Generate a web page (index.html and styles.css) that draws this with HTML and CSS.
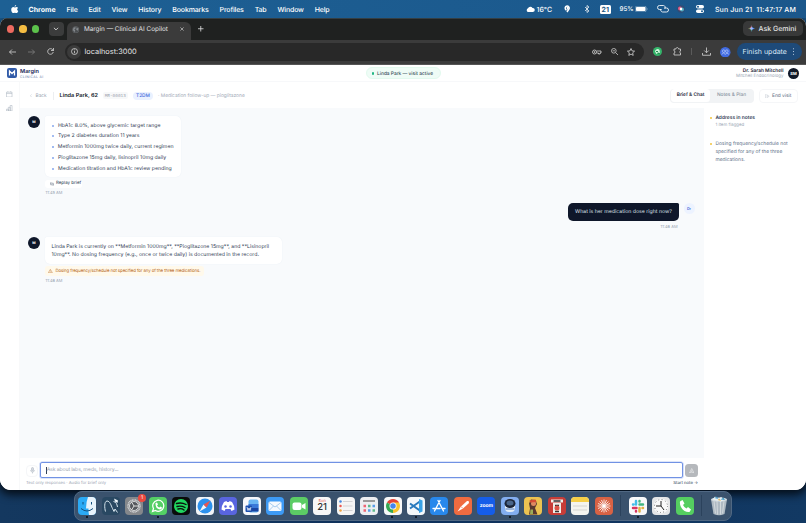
FILE: index.html
```html
<!DOCTYPE html>
<html lang="en">
<head>
<meta charset="utf-8">
<title>Margin — Clinical AI Copilot</title>
<link rel="stylesheet" href="styles.css">
</head>
<body>
<div class="desktop">
  <header class="menubar">
    <svg class="apple" viewBox="0 0 16 18"><path fill="#fff" d="M11 0c.1 2-1.500 3.800-3.300 3.800C7.500 2 9.200.2 11 0zM14.800 6.100c-2.600 1.700-2.200 5.200.7 6.400-.8 2.300-2.400 5-4 5-1.300 0-1.700-.8-3.200-.8s-2 .8-3.200.8C3 17.500.5 13.500.5 9.800c0-3.500 2.200-5.400 4.400-5.400 1.400 0 2.400.9 3.400.9s2.200-1 4-1c1.100.1 2.100.8 2.500 1.800z"/></svg>
    <nav class="menus"><b>Chrome</b><span>File</span><span>Edit</span><span>View</span><span>History</span><span>Bookmarks</span><span>Profiles</span><span>Tab</span><span>Window</span><span>Help</span></nav>
    <div class="status">
      <svg class="s-cloud" viewBox="0 0 18 12"><path fill="#fff" d="M4 12a4 4 0 0 1 0-7.500A5 5 0 0 1 13 4a4 4 0 0 1 1 8z"/></svg>
      <span class="s-temp">16°C</span>
      <svg class="s-pin" viewBox="0 0 12 16"><path fill="none" stroke="#fff" stroke-width="3" d="M4 10A4 4 0 1 1 9 8l-4 6M6 4v5"/></svg>
      <svg class="s-bt" viewBox="0 0 10 16"><path fill="none" stroke="#fff" stroke-width="1.400" d="M1 4l8 8-4 3V1l4 3-8 8"/></svg>
      <span class="s-day">21</span>
      <span class="s-pct">95%</span>
      <svg class="s-bat" viewBox="0 0 26 12"><rect x=".5" y=".5" width="22" height="11" rx="3" fill="none" stroke="#b4cbdd"/><rect x="2" y="2" width="19" height="8" rx="1.500" fill="#fff"/><path fill="#b4cbdd" d="M24 4q2 2 0 4z"/></svg>
      <svg class="s-link" viewBox="0 0 24 16"><g fill="none" stroke="#fff" stroke-width="1.700"><path d="M9 9H5a4 4 0 0 1 0-8h8a4 4 0 0 1 3 6"/><path d="M14 6h5a4 4 0 0 1 0 8h-8a4 4 0 0 1-3-6"/></g></svg>
      <svg class="s-siri" viewBox="0 0 16 16"><circle cx="8" cy="8" r="7.500" fill="#344b73"/><circle cx="6" cy="7" r="4" fill="#e05b83"/><circle cx="10" cy="9" r="4" fill="#51afc4"/><circle cx="8" cy="8" r="2.500" fill="#fff"/></svg>
      <svg class="s-ctl" viewBox="0 0 16 16"><rect width="16" height="7" rx="3.500" fill="#fff"/><circle cx="4" cy="3.500" r="2" fill="#1d5b8f"/><rect y="9" width="16" height="7" rx="3.500" fill="#fff"/><circle cx="12" cy="12.500" r="2" fill="#1d5b8f"/></svg>
      <span class="s-date">Sun Jun 21&nbsp; 11:47:17 AM</span>
    </div>
  </header>

  <main class="window">
    <div class="tabstrip">
      <div class="lights"><i class="red"></i><i class="yellow"></i><i class="green"></i></div>
      <div class="tabsearch"><svg viewBox="0 0 10 10"><path class="ln" d="M1.500 3L5 6.500 8.500 3"/></svg></div>
      <div class="tab">
        <svg class="globe" viewBox="0 0 16 16"><circle cx="8" cy="8" r="7" fill="#4b4e51" stroke="#73777b"/><path fill="#85898d" d="M3 4l4-2 1 3-3 2 2 3-1 3-4-4zM10 3l4 3-2 4-3-2z"/></svg>
        <span>Margin — Clinical AI Copilot</span>
        <svg class="x" viewBox="0 0 10 10"><path class="ln" d="M1 1l8 8M9 1L1 9"/></svg>
      </div>
      <svg class="plus" viewBox="0 0 10 10"><path class="ln" d="M5 0v10M0 5h10"/></svg>
      <div class="gemini"><svg viewBox="0 0 16 16"><path fill="#4e8df5" d="M8 0q1 7 8 8-7 1-8 8z"/><path fill="#e66556" d="M8 0Q7 7 0 8h8z"/><path fill="#58b87c" d="M0 8q7 1 8 8V8z"/><path fill="#a9b8f6" d="M8 4q1 3 4 4-3 1-4 4-1-3-4-4 3-1 4-4z"/></svg><span>Ask Gemini</span></div>
    </div>
    <div class="toolbar">
      <svg class="t-back" viewBox="0 0 14 12"><path class="ln" d="M14 6H1M6 1L1 6l5 5"/></svg>
      <svg class="t-fwd" viewBox="0 0 14 12"><path class="ln" d="M0 6h13M8 1l5 5-5 5"/></svg>
      <svg class="t-rel" viewBox="0 0 14 14"><path class="ln" d="M12.500 8A5.600 5.600 0 1 1 11 3l2 2M13 0v5H8"/></svg>
      <div class="omnibox">
        <span class="info"><svg viewBox="0 0 14 14"><circle class="ln" cx="7" cy="7" r="6"/><path class="ln" d="M7 6v4.500M7 3v1.500"/></svg></span>
        <span class="url">localhost:3000</span>
        <svg class="o-key" viewBox="0 0 20 12"><circle class="ln" cx="5" cy="6" r="4"/><circle cx="5" cy="6" r="1.500" fill="#ddd"/><path class="ln" d="M9 4h9v4h-2v2h-3V8H9"/></svg>
        <svg class="o-zoom" viewBox="0 0 16 16"><circle class="ln" cx="6" cy="6" r="5"/><path class="ln" d="M10 10l5.500 5.500M3.500 6h5"/></svg>
        <svg class="o-star" viewBox="0 0 16 16"><path class="ln" d="M8 1l2.100 4.800 5 .5-3.800 3.400 1.100 5.100L8 12.200l-4.400 2.600 1.100-5.100L.9 6.300l5-.5z"/></svg>
      </div>
      <svg class="t-green" viewBox="0 0 18 18"><circle cx="9" cy="9" r="9" fill="#35b56b"/><path fill="#d5f5df" d="M4 9a5 5 0 0 1 9-3l1 6-3-1-4 3z"/><path d="M6 9h4M9 12l5 2" stroke="#218d50" stroke-width="2"/></svg>
      <svg class="t-ext" viewBox="0 0 18 18"><path class="ln" d="M2 4h4c0-4 5-4 5 0h4v4c-2 0-2 4 0 4v4H2v-4c3 0 3-4 0-4z"/></svg>
      <i class="t-sep"></i>
      <svg class="t-down" viewBox="0 0 18 18"><path class="ln" d="M9 1v10M4.500 7L9 11.500 13.500 7M1 12v4.500h16V12"/></svg>
      <svg class="t-user" viewBox="0 0 20 20"><circle cx="10" cy="10" r="10" fill="#416be2"/><g fill="none" stroke="#bdcef8" stroke-width="1.300"><circle cx="7" cy="8" r="2.500"/><circle cx="13" cy="8" r="2.500"/><path d="M3 14q4-5 7 0 3-5 7 0"/></g></svg>
      <div class="finish"><span>Finish update</span><b></b></div>
    </div>

    <div class="app">
      <div class="topbar">
        <div class="brand">
          <svg viewBox="0 0 20 20"><rect width="20" height="20" rx="4" fill="#315ba8"/><path d="M5 15V6l5 5 5-5v9" fill="none" stroke="#fff" stroke-width="2.500"/></svg>
          <div><b>Margin</b><small>CLINICAL AI</small></div>
        </div>
        <div class="active"><i></i><span>Linda Park — visit active</span></div>
        <div class="doctor"><div><b>Dr. Sarah Mitchell</b><small>Mitchell Endocrinology</small></div><span class="sm">SM</span></div>
      </div>
      <div class="body">
        <aside class="rail">
          <svg viewBox="0 0 14 14"><path class="gr" d="M1 2.500h12V13H1zM1 5.500h12M4 .5v2M10 .5v2"/></svg>
          <svg viewBox="0 0 14 14"><path class="gr" d="M1 13V9h4v4zM5 13V5h4v8zM9 13V1h4v12z"/></svg>
        </aside>
        <section class="content">
          <div class="subhead">
            <span class="back"><svg viewBox="0 0 6 10"><path class="gr" d="M5 1L1 5l4 4"/></svg>Back</span>
            <b class="patient">Linda Park, 62</b>
            <span class="mr">MR-00013</span>
            <span class="t2">T2DM</span>
            <span class="reason">· Medication follow-up — pioglitazone</span>
            <div class="seg"><b>Brief &amp; Chat</b><span>Notes &amp; Plan</span></div>
            <div class="end"><svg viewBox="0 0 14 14"><path class="gr" d="M5 1H2v12h3M7 3v8l6-4z"/></svg>End visit</div>
          </div>
          <div class="cols">
            <div class="chatcol">
              <div class="chat">
                <div class="msg">
                  <span class="av">M</span>
                  <div class="stack">
                    <ul class="bubble brief"><li>HbA1c 8.0%, above glycemic target range</li><li>Type 2 diabetes duration 11 years</li><li>Metformin 1000mg twice daily, current regimen</li><li>Pioglitazone 15mg daily, lisinopril 10mg daily</li><li>Medication titration and HbA1c review pending</li></ul>
                    <span class="replay"><svg viewBox="0 0 12 12"><path fill="none" stroke="#475569" stroke-width="1.200" d="M4 1L1 3.500 4 6M1 3.500h9V6M8 6l3 2.500L8 11M11 8.500H2V6"/></svg>Replay brief</span>
                    <time>11:45 AM</time>
                  </div>
                </div>
                <div class="msg mine">
                  <div class="stack"><div class="ask">What is her medication dose right now?</div><time>11:46 AM</time></div>
                  <span class="dr">Dr</span>
                </div>
                <div class="msg reply">
                  <span class="av">M</span>
                  <div class="stack">
                    <div class="bubble answer">Linda Park is currently on **Metformin 1000mg**, **Pioglitazone 15mg**, and **Lisinopril<br>10mg**. No dosing frequency (e.g., once or twice daily) is documented in the record.</div>
                    <span class="warn"><svg viewBox="0 0 14 12"><path fill="none" stroke="#b86b25" stroke-width="1.300" d="M7 1l6 10H1zM7 4.500v3M7 8.500v1"/></svg>Dosing frequency/schedule not specified for any of the three medications.</span>
                    <time>11:46 AM</time>
                  </div>
                </div>
              </div>
              <div class="composer">
                <div class="row">
                  <span class="mic"><svg viewBox="0 0 10 14"><rect x="3" y="1" width="4" height="7" rx="2" fill="#d5dae1" stroke="#a5aebb"/><path fill="none" stroke="#a5aebb" d="M1 6q0 4 4 4t4-4M5 10v3"/></svg></span>
                  <div class="input"><i></i>Ask about labs, meds, history...</div>
                  <span class="send"><svg viewBox="0 0 12 12"><path fill="none" stroke="#fff" d="M6 1l5 10-5-2-5 2zM6 5v4"/></svg></span>
                </div>
                <div class="hint"><span>Text only responses · Audio for brief only</span><span class="start">Start note →</span></div>
              </div>
            </div>
            <aside class="notes">
              <div class="nh"><i></i><div><b>Address in notes</b><small>1 item flagged</small></div></div>
              <div class="ni"><i></i><p>Dosing frequency/schedule not<br>specified for any of the three<br>medications.</p></div>
            </aside>
          </div>
        </section>
      </div>
    </div>
  </main>

  <footer class="dockwrap">
    <div class="dock">
      <span class="slot run"><svg viewBox="0 0 36 36"><rect width="36" height="36" rx="8" fill="#2baaf5"/><path fill="#e9f3fb" d="M20 0h8a8 8 0 0 1 8 8v20a8 8 0 0 1-8 8h-6c-1-5-1-9-1-13h-5q0-13 4-23z"/><path d="M10 10v5M27 10v5M6 23q12 10 24 0" fill="none" stroke="#15517f" stroke-width="2"/></svg></span>
      <span class="slot"><svg viewBox="0 0 36 36"><rect width="36" height="36" rx="8" fill="#294862"/><path d="M7 29C5 22 4 9 10 8c6 0 8 9 11 15l3 6 2-5 5 7M23 9c5 1 7 5 8 11" fill="none" stroke="#d7e5ee" stroke-width="2"/><path fill="#eef5fa" d="M24 3l8 4-1 5-5-3z"/></svg></span>
      <span class="slot"><svg viewBox="0 0 36 36"><rect width="36" height="36" rx="8" fill="#85878b"/><circle cx="18" cy="18" r="12" fill="none" stroke="#d5d6d8" stroke-width="3" stroke-dasharray="2 1"/><circle cx="18" cy="18" r="9" fill="#55585d" stroke="#d5d6d8" stroke-width="2"/><path d="M18 18h9M18 18l-5-8M18 18l-5 8" stroke="#ddd" stroke-width="2"/></svg><em>1</em></span>
      <span class="slot run"><svg viewBox="0 0 36 36"><rect width="36" height="36" rx="8" fill="#54cf65"/><path d="M7 29l2-6a11 11 0 1 1 4 4z" fill="none" stroke="#fff" stroke-width="2.500"/><path d="M13 12l3-1 2 4-2 2q2 4 5 4l2-2 3 2q0 4-4 4-10-2-9-13z" fill="#fff"/></svg></span>
      <span class="slot"><svg viewBox="0 0 36 36"><rect width="36" height="36" rx="8" fill="#090b0a"/><circle cx="18" cy="18" r="14" fill="#20d760"/><path d="M9 13q10-3 19 2M10 19q9-2 16 2M12 24q7-2 12 2" fill="none" stroke="#09110b" stroke-width="2.800" stroke-linecap="round"/></svg></span>
      <span class="slot"><svg viewBox="0 0 36 36"><rect width="36" height="36" rx="8" fill="#f1f4f7"/><circle cx="18" cy="18" r="15" fill="#2d91ed"/><path fill="#f7f7f7" d="M7 29l8-14 6 6z"/><path fill="#e85650" d="M29 7L15 15l6 6z"/></svg></span>
      <span class="slot"><svg viewBox="0 0 36 36"><rect width="36" height="36" rx="8" fill="#5965df"/><path fill="#fff" d="M10 10l5-2 1 2h4l1-2 5 2q5 7 5 15l-6 3-2-4H13l-2 4-6-3q0-8 5-15z"/><circle cx="13" cy="19" r="2.500" fill="#5965df"/><circle cx="23" cy="19" r="2.500" fill="#5965df"/></svg></span>
      <span class="slot"><svg viewBox="0 0 36 36"><rect width="36" height="36" rx="8" fill="#f7f8fb"/><rect x="11" y="5" width="20" height="26" rx="4" fill="#68b4f2"/><path d="M11 14h20v8H11z" fill="#3978d8"/><path d="M11 22h20v7H11z" fill="#1845a2"/><rect x="5" y="17" width="13" height="13" rx="2" fill="#1c4fad"/><path d="M8 20l2 7 2-5 2 5 2-7" fill="none" stroke="#fff" stroke-width="1.500"/></svg></span>
      <span class="slot"><svg viewBox="0 0 36 36"><rect width="36" height="36" rx="8" fill="#3d9af5"/><rect x="5" y="9" width="26" height="19" rx="3" fill="#f5f9fe"/><path d="M6 11l12 9 12-9M6 27l9-9M30 27l-9-9" fill="none" stroke="#8abbe8" stroke-width="1.500"/></svg></span>
      <span class="slot"><svg viewBox="0 0 36 36"><rect width="36" height="36" rx="8" fill="#5ccc65"/><rect x="5" y="11" width="18" height="15" rx="4" fill="#fff"/><path d="M24 16l7-4v13l-7-4z" fill="#fff"/></svg></span>
      <span class="slot cal"><small>Sun</small><b>21</b></span>
      <span class="slot"><svg viewBox="0 0 36 36"><rect width="36" height="36" rx="8" fill="#f5f5f5"/><path d="M12 9h19M12 18h19M12 27h19" stroke="#c7c7c9" stroke-width="1.500"/><circle cx="7" cy="9" r="2.500" fill="#4488df"/><circle cx="7" cy="18" r="2.500" fill="#ea584f"/><circle cx="7" cy="27" r="2.500" fill="#f0a341"/></svg></span>
      <span class="slot"><svg viewBox="0 0 36 36"><rect width="36" height="36" rx="8" fill="#eceef1"/><path d="M6 8h24" stroke="#999" stroke-width="4"/><path d="M7 18h5M7 27h5" stroke="#ed6573" stroke-width="5"/><path d="M16 18h5M25 27h5" stroke="#5dba8a" stroke-width="5"/><path d="M25 18h5M16 27h5" stroke="#599ee9" stroke-width="5"/></svg></span>
      <span class="slot run"><svg viewBox="0 0 36 36"><rect width="36" height="36" rx="8" fill="#f8f8f8"/><path fill="#e54335" d="M18 18L5.900 11a14 14 0 0 1 24.200 0z"/><path fill="#f7c32e" d="M18 18V11h12.100A14 14 0 0 1 18 32z"/><path fill="#35a853" d="M18 18v14A14 14 0 0 1 5.900 11z"/><circle cx="18" cy="18" r="7" fill="#fff"/><circle cx="18" cy="18" r="5.500" fill="#4385ee"/></svg></span>
      <span class="slot run"><svg viewBox="0 0 36 36"><rect width="36" height="36" rx="8" fill="#f3f7fa"/><path d="M27 8L6 23M27 28L6 13" stroke="#2879bd" stroke-width="4"/><path fill="#38a2e7" d="M24 4l7 3v22l-7 3z"/></svg></span>
      <span class="slot"><svg viewBox="0 0 36 36"><rect width="36" height="36" rx="8" fill="#2888ec"/><path d="M20 7L9 28M16 7l11 21M6 23h14M24 23h6" stroke="#fff" stroke-width="2.600" stroke-linecap="round"/></svg></span>
      <span class="slot"><svg viewBox="0 0 36 36"><rect width="36" height="36" rx="8" fill="#ef6b40"/><path d="M7 29l7-10L26 8q6-1 3 5L18 23z" fill="#fff"/><path d="M14 19l4 4" stroke="#ef6b40" stroke-width="1.500"/></svg></span>
      <span class="slot zoom">zoom</span>
      <span class="slot run"><svg viewBox="0 0 36 36"><rect width="36" height="36" rx="8" fill="#83aef0"/><rect x="8" y="5" width="20" height="25" rx="8" fill="#e4edf7"/><ellipse cx="18" cy="13" rx="11" ry="9" fill="#1b2437"/><ellipse cx="18" cy="12" rx="7" ry="5" fill="#4a6589"/><path d="M9 24h18" stroke="#527bb9" stroke-width="2"/></svg></span>
      <span class="slot"><svg viewBox="0 0 36 36"><rect width="36" height="36" rx="8" fill="#ecc251"/><path fill="#59392f" d="M10 35l2-12-2-10 4-8 9 1 3 8-4 8 5 13z"/><circle cx="19" cy="13" r="5" fill="#df8b62"/><path fill="#d94d35" d="M11 7l12-2 2 5-13 1z"/><path fill="#9dac59" d="M13 25h5v9h-6z"/></svg></span>
      <span class="slot"><svg viewBox="0 0 36 36"><rect width="36" height="36" rx="8" fill="#c73d38"/><path fill="#f0eee8" d="M6 5h24v6H6zM10 12h16v20H10z"/><path d="M11 8h14M14 17h8M14 29h8" stroke="#333" stroke-width="3"/><circle cx="18" cy="22" r="5" fill="#dc5548"/></svg></span>
      <span class="slot"><svg viewBox="0 0 36 36"><rect width="36" height="36" rx="8" fill="#f4f4ef"/><path fill="#f6cf48" d="M0 10V8a8 8 0 0 1 8-8h20a8 8 0 0 1 8 8v2z"/><path d="M4 18h28M4 26h28" stroke="#c9c9c6" stroke-width="1.500"/></svg></span>
      <span class="slot"><svg viewBox="0 0 36 36"><rect width="36" height="36" rx="8" fill="#d86244"/><path d="M18 5v26M5 18h26M9 9l18 18M27 9L9 27M13 6l10 24M23 6L13 30M6 13l24 10M6 23l24-10" stroke="#fff" stroke-width="1.600"/></svg></span>
      <i class="divider"></i>
      <span class="slot run"><svg viewBox="0 0 36 36"><rect width="36" height="36" rx="8" fill="#f9f9fa"/><g stroke-width="5" stroke-linecap="round"><path d="M14 8v7M8 15h1" stroke="#42bde8"/><path d="M21 15h7M21 8v1" stroke="#42b782"/><path d="M21 22v7M27 22h1" stroke="#e4b143"/><path d="M8 22h7M14 28v1" stroke="#d73561"/></g></svg></span>
      <span class="slot"><svg viewBox="0 0 36 36"><rect width="36" height="36" rx="8" fill="#e5e6e7"/><circle cx="18" cy="18" r="15" fill="#f9f9f9"/><circle cx="18" cy="18" r="13" fill="none" stroke="#555" stroke-width="2" stroke-dasharray="1.500 5.300"/><path d="M18 18V8M18 18H8M18 18l6 8" stroke="#222" stroke-width="2"/></svg></span>
      <span class="slot"><svg viewBox="0 0 36 36"><rect width="36" height="36" rx="8" fill="#55ce60"/><path fill="#fff" d="M8 9l5-3 4 7-3 3q3 6 7 7l3-3 6 5-3 5C17 32 6 20 8 9z"/></svg></span>
      <i class="divider late"></i>
      <span class="slot trash"><svg viewBox="0 0 36 40"><path fill="#aeb9c2" d="M2 7h32l-5 29q-11 5-22 0z"/><path d="M8 10l3 25M14 10l1 27M21 10v27M28 10l-3 25" stroke="#d2d8dc" stroke-width="2"/><ellipse cx="18" cy="7" rx="16" ry="4" fill="#d4dce1"/><path fill="#e8f0f3" d="M5 7l5-6 6 5 6-4 8 5-8 4z"/><path fill="#4a9cc6" d="M9 4l5-3 2 5zM21 7l6-4 3 5z"/><path fill="#e0b968" d="M15 8l4-3 3 5z"/></svg></span>
    </div>
  </footer>
</div>
</body>
</html>
```
FILE: styles.css
```css
* { box-sizing: border-box; }
body { margin: 0; font-family: Inter, "Liberation Sans", sans-serif; text-rendering: geometricPrecision; }
b { font-weight: 600; }
svg { display: block; flex: none; }
.ln { fill: none; stroke: #dedede; stroke-width: 1.5; }
.gr { fill: none; stroke: #9ba5b3; stroke-width: 1; }

.desktop { width: 806px; height: 523px; overflow: hidden; display: flex; flex-direction: column; white-space: nowrap; background: linear-gradient(90deg, #1d6094 0, #1b578b 100%) top / 100% 40px no-repeat, linear-gradient(90deg, #14385f, #0e305b 50%, #123963); }

.menubar { height: 18px; flex: none; display: flex; align-items: center; padding-left: 11px; color: #fff; font-size: 7px; font-weight: 500; }
.apple { width: 7.5px; height: 8.5px; margin-right: 10px; }
.menus { display: flex; gap: 10.9px; letter-spacing: -.15px; }
.menus b { font-weight: 700; letter-spacing: 0; }
.status { display: flex; align-items: center; margin-left: auto; height: 18px; }
.s-cloud { width: 9px; height: 6px; margin-right: 1.5px; }
.s-temp { width: 27px; }
.s-pin { width: 7px; height: 8px; margin-right: 13px; }
.s-bt { width: 6px; height: 8px; margin-right: 10px; }
.s-day { width: 11.5px; height: 9px; border-radius: 1.5px; background: #fff; color: #245984; text-align: center; line-height: 9px; font-weight: 700; margin-right: 8.5px; }
.s-pct { width: 15.5px; font-size: 6.3px; }
.s-bat { width: 13px; height: 6px; margin-right: 9px; }
.s-link { width: 12px; height: 8px; margin-right: 8px; }
.s-siri { width: 8px; height: 8px; margin-right: 11px; }
.s-ctl { width: 8px; height: 8px; margin-right: 11px; }
.s-date { width: 91px; letter-spacing: .1px; }

.window { height: 472px; flex: none; border-radius: 8px 8px 11px 11px; overflow: hidden; display: flex; flex-direction: column; background: #fff; box-shadow: 0 3px 8px 2px #000b; position: relative; z-index: 0; clip-path: inset(0 -20px -30px -20px); }
.tabstrip { height: 22px; flex: none; background: #1f2120; display: flex; align-items: flex-end; border-top: 1px solid #343e43; color: #e2e3e3; }
.lights { display: flex; gap: 5.2px; padding-left: 7px; height: 22px; align-items: center; }
.lights i { width: 7.2px; height: 7.2px; border-radius: 50%; }
.red { background: #ee6a5f; }
.yellow { background: #f4bd42; }
.green { background: #5cc24b; }
.tabsearch { width: 15px; height: 14px; border-radius: 4px; background: #3b3c3c; margin: 0 3px 4px 10px; display: grid; place-items: center; }
.tabsearch svg { width: 6px; height: 6px; }
.tab { width: 124px; height: 18.5px; border-radius: 6px 6px 0 0; background: #3b3b3b; display: flex; align-items: center; padding: 0 0 3px 5px; font-size: 6.4px; }
.globe { width: 7.5px; height: 7.5px; margin-right: 4.5px; }
.tab span { width: 96px; }
.tab .x { width: 4px; height: 4px; }
.plus { width: 5.5px; height: 5.5px; margin: 0 0 8.5px 7.5px; }
.gemini { margin: 0 3px 4px auto; width: 60px; height: 15px; border-radius: 5px; background: #383939; display: flex; align-items: center; padding-left: 5px; gap: 3.5px; font-size: 7px; font-weight: 500; }
.gemini svg { width: 7px; height: 7px; }

.toolbar { height: 24.5px; flex: none; background: #3b3b3b; display: flex; align-items: center; padding-left: 9px; border-bottom: 1px solid #555; }
.t-back { width: 7px; height: 6px; margin-right: 12px; }
.t-fwd { width: 7px; height: 6px; margin-right: 12px; opacity: .45; }
.t-rel { width: 7px; height: 7px; margin-right: 11px; }
.omnibox { width: 579px; height: 18px; border-radius: 9px; background: #282828; display: flex; align-items: center; padding-left: 2px; margin-right: 9px; }
.info { width: 14px; height: 14px; border-radius: 50%; background: #3b3b3b; display: grid; place-items: center; }
.info svg { width: 7px; height: 7px; }
.url { margin-left: 3.5px; font-size: 7.4px; color: #e3e3e3; flex: 1; }
.o-key { width: 10px; height: 6px; margin-right: 8.5px; }
.o-zoom { width: 7.5px; height: 7.5px; margin-right: 9.2px; }
.o-star { width: 8px; height: 8px; margin-right: 8.8px; }
.t-green { width: 9px; height: 9px; margin-right: 11px; }
.t-ext { width: 9px; height: 9px; margin-right: 9px; }
.t-sep { width: 1px; height: 7px; background: #5b5b5b; margin-right: 9.5px; }
.t-down { width: 9px; height: 9px; margin-right: 9.5px; }
.t-user { width: 10.5px; height: 10.5px; margin-right: 6.5px; }
.finish { width: 65px; height: 17px; background: #1e4a79; border-radius: 9px; display: flex; align-items: center; padding-left: 5.5px; font-size: 7px; color: #dce9f8; gap: 4.5px; }
.finish span { width: 46px; }
.finish b { width: 1.2px; height: 1.2px; border-radius: 50%; background: #dce9f8; box-shadow: 0 -2.7px #dce9f8, 0 2.7px #dce9f8; }

.app { flex: 1; min-height: 0; display: flex; flex-direction: column; background: #fff; color: #1e293b; font-size: 5.2px; }
.app small { display: block; }
.topbar { height: 17.5px; flex: none; display: grid; grid-template-columns: 1fr auto 1fr; align-items: center; border-bottom: 1px solid #f7f8fa; padding: 1px 7px 0 7px; }
.brand { display: flex; align-items: center; gap: 3px; }
.brand svg { width: 10px; height: 10px; }
.brand b { display: block; font-size: 5.6px; line-height: 6px; padding-top: 1.2px; color: #172554; }
.brand small { font-size: 3.4px; line-height: 4.5px; letter-spacing: .35px; color: #607aa5; }
.active { height: 12px; width: 75px; border: 1px solid #e2faee; background: #effcf6; border-radius: 6px; display: flex; align-items: center; padding: .8px 0 0 5px; gap: 3px; font-size: 4.8px; font-weight: 500; color: #334a55; }
.active i { width: 2.6px; height: 2.6px; border-radius: 50%; background: #20b783; }
.doctor { display: flex; justify-content: flex-end; align-items: center; gap: 4.5px; text-align: right; }
.doctor b { display: block; font-size: 4.8px; line-height: 6px; padding-top: 1px; }
.doctor small { font-size: 4.4px; line-height: 5.5px; color: #a1aab7; }
.sm { width: 11px; height: 11px; border-radius: 50%; background: #101827; color: #fff; display: grid; place-items: center; font-size: 4px; font-weight: 700; }
.body { flex: 1; min-height: 0; display: flex; }
.rail { width: 20px; flex: none; border-right: 1px solid #f8f9fa; display: flex; flex-direction: column; align-items: center; gap: 7.5px; padding-top: 8.5px; }
.rail svg { width: 6.5px; height: 6.5px; }
.content { flex: 1; min-width: 0; display: flex; flex-direction: column; }
.subhead { height: 26px; flex: none; display: flex; align-items: center; padding: 1px 0 0 10px; }
.back { display: flex; align-items: center; gap: 3.5px; width: 24px; height: 8px; border-right: 1px solid #eceef1; font-size: 4.8px; color: #9aa4b2; margin-right: 5.5px; padding-top: .6px; }
.back svg { width: 2px; height: 3.5px; }
.patient { width: 43.5px; font-size: 5.6px; color: #111827; padding-top: .6px; }
.mr { width: 24.5px; height: 7.5px; text-align: center; font: 4.4px/9px "Liberation Mono", monospace; color: #9aa2af; background: #f7f8f9; border-radius: 2px; margin-right: 5.5px; }
.t2 { width: 20px; height: 8px; line-height: 9.2px; text-align: center; font-size: 4.8px; font-weight: 500; color: #4269dc; background: #eaf1ff; border-radius: 4px; margin-right: 5px; }
.reason { font-size: 4.85px; color: #a0a9b6; padding-top: .6px; }
.seg { margin-left: auto; width: 83.5px; height: 14px; border-radius: 4px; background: #f1f3f5; padding: .8px; display: flex; align-items: center; text-align: center; font-size: 4.8px; line-height: 13.8px; margin-right: 5px; font-weight: 500; color: #8993a2; }
.seg b { width: 39.5px; height: 12.4px; border-radius: 3.5px; background: #fff; color: #1e293b; }
.seg span { flex: 1; height: 12.4px; }
.end { width: 39.5px; height: 14px; border: 1px solid #f5f6f8; border-radius: 4px; display: flex; align-items: center; padding: .8px 0 0 5.5px; gap: 2.5px; font-size: 4.8px; font-weight: 500; color: #748091; margin-right: 8px; }
.end svg { width: 4.5px; height: 4.5px; }
.cols { flex: 1; min-height: 0; display: flex; }
.chatcol { width: 684px; flex: none; display: flex; flex-direction: column; }
.chat { height: 350px; flex: none; background: #f8fafc; padding: 8px 9.5px 0 8px; }
.msg { display: flex; align-items: flex-start; gap: 4.5px; }
.av { width: 12px; height: 12px; border-radius: 50%; background: #0f172a; color: #fff; display: grid; place-items: center; font-size: 3.6px; font-weight: 700; }
.stack { display: flex; flex-direction: column; align-items: flex-start; }
.bubble { background: #fff; border-radius: 1.5px 5px 5px 5px; box-shadow: 0 0 1px #e2e8f0; margin: 0; color: #334155; }
.brief { list-style: none; width: 136px; height: 60.5px; padding: 4.1px 7px 0; }
.brief li { display: flex; align-items: center; height: 10.85px; }
.brief li::before { content: ""; width: 2px; height: 2px; border-radius: 50%; background: #86a7ee; margin: 0 4px 0 .5px; }
.replay { height: 8px; width: 37px; margin-top: 3.2px; padding: .6px 0 0 5px; background: #fff; border-radius: 3px; display: flex; align-items: center; gap: 2.5px; font-size: 4.4px; color: #475569; font-weight: 500; }
.replay svg { width: 4px; height: 4px; }
time { font-size: 4px; line-height: 5px; color: #9aa5b3; margin: 2.8px 0 0 1px; }
.mine { margin-top: 7.5px; justify-content: flex-end; gap: 4.5px; }
.mine .stack { align-items: flex-end; }
.mine time { margin: 2.8px 1.5px 0 0; }
.ask { width: 111px; height: 18.5px; border-radius: 5px 1.5px 5px 5px; background: #0f172a; color: #dfe4ed; text-align: center; line-height: 19.5px; }
.dr { width: 11px; height: 11px; border-radius: 50%; background: #edf3ff; color: #4368d7; display: grid; place-items: center; font-size: 3.8px; font-weight: 600; }
.reply { margin-top: 7.5px; }
.answer { width: 237.500px; height: 27px; padding: 5.8px 7px 0; line-height: 8.5px; }
.warn { height: 9.5px; width: 159px; margin-top: 2.5px; padding: .6px 0 0 3.5px; background: #fff9eb; border-radius: 3px; display: flex; align-items: center; gap: 2.7px; color: #b86b25; font-size: 4.4px; letter-spacing: -.122px; }
.warn svg { width: 4.7px; height: 4px; }
.reply time { margin-top: 2.2px; }
.composer { flex: 1; padding: 3.4px 6px 0 6px; }
.row { display: flex; align-items: center; height: 17px; }
.mic { width: 12px; height: 12px; border: 1px solid #f5f6f8; border-radius: 4px; display: grid; place-items: center; margin-right: 2px; margin-top: 2px; }
.mic svg { width: 5px; height: 7px; }
.input { width: 643px; height: 16.5px; border: 1px solid #7192e4; box-shadow: 0 0 0 .6px #bccdf5; border-radius: 2px; display: flex; align-items: center; padding: .6px 0 0 5px; color: #9ba5b2; margin-right: 2px; letter-spacing: -.15px; }
.input i { width: .7px; height: 7px; background: #334155; }
.send { width: 12.5px; height: 12.5px; border-radius: 3.5px; background: #b5b8bc; display: grid; place-items: center; margin-top: 1.5px; }
.send svg { width: 5.5px; height: 5.5px; }
.hint { display: flex; justify-content: space-between; margin-top: 2.8px; font-size: 4.2px; line-height: 6px; color: #9ba5b2; }
.hint span:first-child { letter-spacing: -.03px; }
.start { color: #475569; font-weight: 500; }
.notes { flex: 1; padding: 7px 0 0 5.5px; }
.notes i { flex: none; width: 2.4px; height: 2.4px; border-radius: 50%; background: #f1c33c; }
.nh { display: flex; gap: 3.5px; height: 22.5px; }
.nh i { margin-top: 2px; }
.nh b { display: block; font-size: 4.9px; line-height: 7px; color: #334155; }
.nh small { font-size: 4.4px; line-height: 7px; color: #a1aab7; }
.ni { display: flex; gap: 3.9px; padding-top: 2.4px; }
.ni i { width: 2px; height: 2px; margin-top: 3px; }
.ni p { margin: 0; font-size: 4.9px; line-height: 8.3px; color: #64748b; }

.dockwrap { height: 33px; flex: none; display: flex; padding: 1px 0 0 74px; position: relative; }
.dock { width: 658px; height: 29.5px; border-radius: 8px; background: #3a526d; border: 1px solid #506883; display: flex; align-items: center; padding-left: .7px; }
.slot { width: 23.48px; height: 29px; flex: none; display: grid; place-items: center; position: relative; }
.slot svg { width: 18px; height: 18px; }
.run::after { content: ""; position: absolute; bottom: 1.8px; left: 10.7px; width: 2px; height: 2px; border-radius: 50%; background: #070d16; }
.slot em { position: absolute; top: 3px; right: 0; width: 8px; height: 8px; border-radius: 50%; background: #ea493f; color: #fff; font: 5px/8px Inter, sans-serif; text-align: center; }
.cal, .zoom { width: 18px; height: 18px; margin: 0 2.74px; border-radius: 4px; background: #f7f7f7; color: #333; }
.cal { display: flex; flex-direction: column; align-items: center; }
.cal small { font-size: 4px; line-height: 4px; margin-top: 2px; color: #e44b45; }
.cal b { font-size: 9.5px; line-height: 10px; font-weight: 500; }
.zoom { background: #155de9; color: #fff; font-size: 5px; font-weight: 700; }
.divider { width: 1px; height: 21px; background: #2b425c; margin: 0 5px 0 4.4px; }
.late { margin: 0 4.5px 0 5.1px; }
.trash svg { height: 20px; }
```
